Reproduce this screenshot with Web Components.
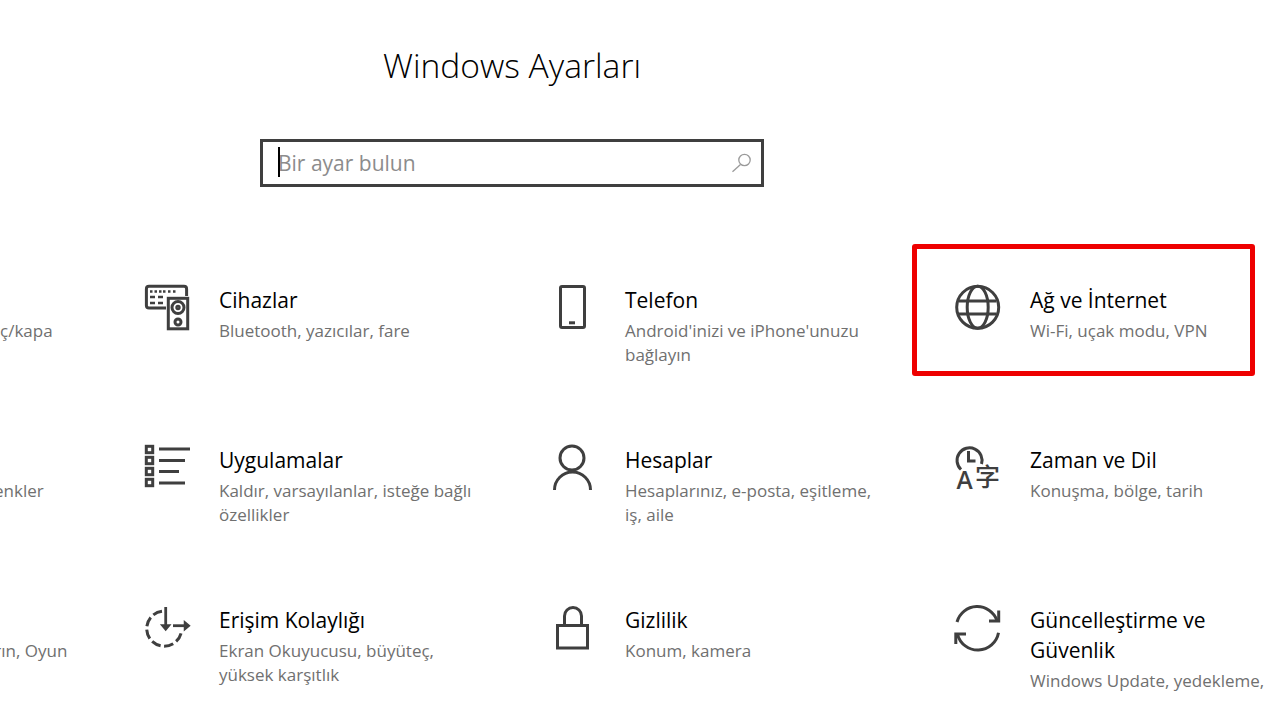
<!DOCTYPE html>
<html lang="tr">
<head>
<meta charset="utf-8">
<title>Windows Ayarları</title>
<style>
  html, body { margin: 0; height: 720px; overflow: hidden; background: #fff; }
  body { font-family: "Open Sans", "Noto Sans", sans-serif; }
</style>
</head>
<body>
<settings-page>
  <settings-search slot="search" placeholder="Bir ayar bulun"></settings-search>

  <settings-tile cut><span slot="sub">ç/kapa</span></settings-tile>
  <settings-tile heading="Cihazlar">
    <svg slot="icon" viewBox="140 280 56 56">
      <path d="M166 308H149a2.6 2.6 0 0 1-2.6-2.6V288.900a2.600 2.600 0 0 1 2.600-2.600H184a2.600 2.600 0 0 1 2.600 2.600V296"/>
      <rect x="168.300" y="298.300" width="19.400" height="30.500"/>
      <circle cx="178" cy="307.500" r="6"/><circle cx="178" cy="307.500" r="1.200"/>
      <circle cx="178" cy="322" r="3"/>
      <path d="M150 291.500h2.500M154.500 291.500h2.500M159 291.500h2.500M163 291.500h2.500M168 291.500h2.500M173 291.500h2.500M150 297h5M158 297h5M150 303h5M158 303h5" stroke-width="2.400"/>
    </svg>
    <span slot="sub">Bluetooth, yazıcılar, fare</span>
  </settings-tile>
  <settings-tile heading="Telefon">
    <svg slot="icon" viewBox="546 280 56 56">
      <rect x="560.500" y="286.500" width="24" height="41" rx="1.500"/>
      <path d="M569 322.800h6"/>
    </svg>
    <span slot="sub">Android'inizi ve iPhone'unuzu<br>bağlayın</span>
  </settings-tile>
  <settings-tile heading="Ağ ve İnternet" highlighted>
    <svg slot="icon" viewBox="951 280 56 56">
      <circle cx="977.700" cy="307.300" r="21"/>
      <ellipse cx="977.700" cy="307.300" rx="10.500" ry="21"/>
      <path d="M959 301h37.400M959 314h37.400"/>
    </svg>
    <span slot="sub">Wi-Fi, uçak modu, VPN</span>
  </settings-tile>

  <settings-tile cut style="--cut:-6px"><span slot="sub">enkler</span></settings-tile>
  <settings-tile heading="Uygulamalar">
    <svg slot="icon" viewBox="140 440 56 56">
      <rect x="146.300" y="446.300" width="6.400" height="6.400"/>
      <rect x="146.300" y="457.300" width="6.400" height="6.400"/>
      <rect x="146.300" y="468.300" width="6.400" height="6.400"/>
      <rect x="146.300" y="479.300" width="6.400" height="6.400"/>
      <path d="M159 449h31M159 460.500h26M159 471.500h20M159 483h26"/>
    </svg>
    <span slot="sub">Kaldır, varsayılanlar, isteğe bağlı<br>özellikler</span>
  </settings-tile>
  <settings-tile heading="Hesaplar">
    <svg slot="icon" viewBox="546 440 56 56">
      <circle cx="572" cy="458" r="12"/>
      <path d="M554.500 490a18 18 0 0 1 36 0"/>
    </svg>
    <span slot="sub">Hesaplarınız, e-posta, eşitleme,<br>iş, aile</span>
  </settings-tile>
  <settings-tile heading="Zaman ve Dil">
    <svg slot="icon" viewBox="951 440 56 56">
      <path d="M961 469.500a12.500 12.500 0 1 1 20.500-5.500"/>
      <path d="M968.500 451v10h7"/>
      <text x="956.500" y="489" font-family="Open Sans" font-size="24.500" font-weight="600" fill="#3f3f3f" stroke="none">A</text>
      <text x="975" y="486" font-family="Noto Sans CJK SC" font-size="25" font-weight="500" fill="#3f3f3f" stroke="none">字</text>
    </svg>
    <span slot="sub">Konuşma, bölge, tarih</span>
  </settings-tile>

  <settings-tile cut style="--cut:-10px"><span slot="sub">ırın, Oyun</span></settings-tile>
  <settings-tile heading="Erişim Kolaylığı">
    <svg slot="icon" viewBox="140 600 56 56">
      <path d="M162 611.300a17.500 17.500 0 1 0 19.500 20" stroke-dasharray="9.500 3.600"/>
      <path d="M165.700 607v21" stroke-width="2.800"/>
      <path d="M161.500 625l4.200 5 4.200-5z" fill="#3f3f3f" stroke-width="1.500"/>
      <path d="M173 625.700h14" stroke-width="2.800"/>
      <path d="M184.500 621.500l5 4.200-5 4.200z" fill="#3f3f3f" stroke-width="1.500"/>
    </svg>
    <span slot="sub">Ekran Okuyucusu, büyüteç,<br>yüksek karşıtlık</span>
  </settings-tile>
  <settings-tile heading="Gizlilik">
    <svg slot="icon" viewBox="546 600 56 56">
      <rect x="557.500" y="625.500" width="30" height="22.500"/>
      <path d="M564.500 625v-9a8.500 8.500 0 0 1 17 0v9"/>
    </svg>
    <span slot="sub">Konum, kamera</span>
  </settings-tile>
  <settings-tile heading="Güncelleştirme ve Güvenlik">
    <svg slot="icon" viewBox="951 600 56 56">
      <path d="M957 622a21 21 0 0 1 40-1.500"/>
      <path d="M998.700 610.500v10.500H989"/>
      <path d="M998.500 632.800a21 21 0 0 1-41 1.500"/>
      <path d="M955.800 644v-10H966"/>
    </svg>
    <span slot="sub">Windows Update, yedekleme,</span>
  </settings-tile>
</settings-page>

<script>
// Sayfa: baslik, arama kutusu ve ayar kutulari icin grid
const pageTemplate = document.createElement("template");
pageTemplate.innerHTML = `
<style>
  :host { display: block; height: 720px; overflow: hidden; }
  .head { width: 1024px; display: flex; flex-direction: column; align-items: center; }
  h1 { margin: 40px 0 0; font-size: 33.6px; line-height: 50px; font-weight: 300; color: #000; }
  .search { display: block; margin-top: 49px; }
  .grid { display: grid; grid-template-columns: 140px 406px 405px 328px; grid-auto-rows: 160px; margin-top: 93px; }
</style>
<div class="head">
  <h1>Windows Ayarları</h1>
  <div class="search"><slot name="search"></slot></div>
</div>
<div class="grid"><slot></slot></div>
`;

class SettingsPage extends HTMLElement {
  constructor() {
    super();
    this.attachShadow({ mode: "open" });
    this.shadowRoot.appendChild(pageTemplate.content.cloneNode(true));
  }
}

// Arama kutusu
const searchTemplate = document.createElement("template");
searchTemplate.innerHTML = `
<style>
  :host { display: block; }
  .box { position: relative; box-sizing: border-box; width: 504px; height: 48px; border: 3px solid #3f3f3f; background: #fff; display: flex; align-items: center; justify-content: space-between; padding: 0 10px 0 15px; }
  .text { font-size: 21px; line-height: 40px; color: #8c8c8c; }
  .caret { position: absolute; left: 15px; top: 5px; width: 2px; height: 30px; background: #000; }
  svg { width: 24px; height: 24px; fill: none; stroke: #9a9a9a; stroke-width: 1.3; }
</style>
<div class="box">
  <span class="text"></span>
  <span class="caret"></span>
  <svg viewBox="727 151 24 24"><circle cx="744.500" cy="160" r="5.700"/><path d="M740.500 164.500l-8 7.300"/></svg>
</div>
`;

class SettingsSearch extends HTMLElement {
  constructor() {
    super();
    this.attachShadow({ mode: "open" });
    this.shadowRoot.appendChild(searchTemplate.content.cloneNode(true));
  }

  connectedCallback() {
    this.shadowRoot.querySelector(".text").textContent = this.getAttribute("placeholder");
  }
}

// Tek bir ayar kutusu: ikon, baslik, aciklama
const tileTemplate = document.createElement("template");
tileTemplate.innerHTML = `
<style>
  :host { display: grid; grid-template-columns: 79px 1fr; align-content: start; position: relative; min-width: 0; white-space: nowrap; }
  :host([cut]) { grid-template-columns: 1fr; }
  ::slotted(svg) { display: block; width: 56px; height: 56px; fill: none; stroke: #3f3f3f; stroke-width: 3; }
  .text { padding-top: 5px; }
  .title { font-size: 21px; line-height: 30px; color: #000; white-space: normal; }
  .title:empty { height: 30px; }
  .sub { font-size: 17px; line-height: 24px; margin-top: 4px; margin-left: var(--cut, 0); color: #707070; }
  .mark { display: none; position: absolute; left: -39px; top: -36px; width: 343px; height: 132px; box-sizing: border-box; border: 5px solid #ee0000; border-radius: 3px; }
  :host([highlighted]) .mark { display: block; }
</style>
<slot name="icon"></slot>
<div class="text">
  <div class="title"></div>
  <div class="sub"><slot name="sub"></slot></div>
</div>
<div class="mark"></div>
`;

class SettingsTile extends HTMLElement {
  constructor() {
    super();
    this.attachShadow({ mode: "open" });
    this.shadowRoot.appendChild(tileTemplate.content.cloneNode(true));
  }

  connectedCallback() {
    this.shadowRoot.querySelector(".title").textContent = this.getAttribute("heading") || "";
  }
}

customElements.define("settings-page", SettingsPage);
customElements.define("settings-search", SettingsSearch);
customElements.define("settings-tile", SettingsTile);
</script>
</body>
</html>
